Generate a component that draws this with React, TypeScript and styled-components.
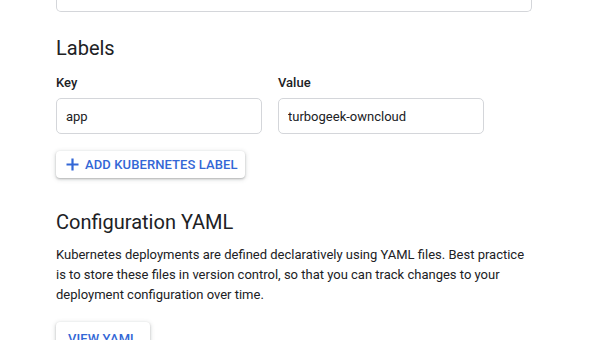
import React from "react";
import styled, { createGlobalStyle } from "styled-components";

const GlobalStyle = createGlobalStyle`
  html, body {
    margin: 0;
    padding: 0;
    background: #ffffff;
    overflow: hidden;
  }
  body {
    font-family: Roboto, "Liberation Sans", Arial, sans-serif;
    color: #202124;
    -webkit-font-smoothing: antialiased;
  }
`;

const Page = styled.main`
  width: 602px;
  height: 340px;
  overflow: hidden;
  padding-left: 56px;
  box-sizing: border-box;
  display: flex;
  flex-direction: column;
  align-items: flex-start;
`;

const CardTail = styled.div`
  flex-shrink: 0;
  width: 476px;
  height: 12px;
  box-sizing: border-box;
  border: 1px solid #d4d6da;
  border-top: none;
  border-radius: 0 0 5px 5px;
`;

const SectionTitle = styled.h2<{ $top: number }>`
  flex-shrink: 0;
  margin: ${(p) => p.$top}px 0 0;
  font-size: 20px;
  line-height: 24px;
  font-weight: 400;
  color: #202124;
`;

const FieldRow = styled.div`
  flex-shrink: 0;
  display: flex;
  gap: 16px;
  margin-top: 15px;
`;

const Field = styled.label`
  display: flex;
  flex-direction: column;
  gap: 7px;
`;

const FieldLabel = styled.span`
  font-size: 13px;
  line-height: 16px;
  font-weight: 500;
  color: #202124;
`;

const TextInput = styled.input`
  width: 206px;
  height: 36px;
  box-sizing: border-box;
  padding: 0 9px;
  border: 1px solid #d4d6da;
  border-radius: 5px;
  font-family: Roboto, "Liberation Sans", Arial, sans-serif;
  font-size: 13px;
  color: #202124;
  background: #fff;
  outline: none;
`;

const RaisedButton = styled.button<{ $top: number; $height: number; $icon?: boolean }>`
  flex-shrink: 0;
  margin-top: ${(p) => p.$top}px;
  display: inline-flex;
  align-items: center;
  gap: 6px;
  height: ${(p) => p.$height}px;
  padding: ${(p) => (p.$icon ? "0 7px 0 10px" : "0 13px 0 12px")};
  border: none;
  border-radius: 4px;
  background: #fff;
  box-shadow: 0 1px 2px rgba(60, 64, 67, 0.3), 0 1px 4px 1px rgba(60, 64, 67, 0.15);
  font-family: Roboto, "Liberation Sans", Arial, sans-serif;
  font-size: 13px;
  font-weight: 500;
  letter-spacing: 0.1px;
  text-transform: uppercase;
  color: #3367d6;
  cursor: pointer;
`;

const Description = styled.p`
  flex-shrink: 0;
  margin: 11px 0 0;
  width: 476px;
  font-size: 13px;
  line-height: 20px;
  color: #202124;
`;

const PlusIcon = () => (
  <svg width="13" height="13" viewBox="0 0 13 13" aria-hidden="true">
    <path d="M6.5 0.5v12M0.5 6.5h12" stroke="#3367d6" strokeWidth="2.2" fill="none" />
  </svg>
);

const App = () => {
  return (
    <>
      <GlobalStyle />
      <Page>
        <CardTail />
        <SectionTitle $top={24}>Labels</SectionTitle>
        <FieldRow>
          <Field>
            <FieldLabel>Key</FieldLabel>
            <TextInput defaultValue="app" />
          </Field>
          <Field>
            <FieldLabel>Value</FieldLabel>
            <TextInput defaultValue="turbogeek-owncloud" />
          </Field>
        </FieldRow>
        <RaisedButton $top={17} $height={27} $icon>
          <PlusIcon />
          Add Kubernetes label
        </RaisedButton>
        <SectionTitle $top={32}>Configuration YAML</SectionTitle>
        <Description>
          Kubernetes deployments are defined declaratively using YAML files. Best practice
          is to store these files in version control, so that you can track changes to your
          deployment configuration over time.
        </Description>
        <RaisedButton $top={17} $height={32}>View YAML</RaisedButton>
      </Page>
    </>
  );
};

export default App;
